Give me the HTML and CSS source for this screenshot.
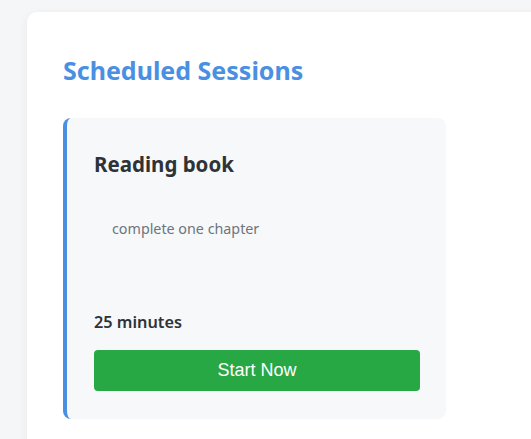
FILE: index.html
```html
<!DOCTYPE html>
<html lang="en">
<head>
<meta charset="utf-8">
<title>Scheduled Sessions</title>
<link rel="stylesheet" href="styles.css">
</head>
<body>
<main class="panel">
  <h2 class="panel-title">Scheduled Sessions</h2>
  <div class="session-list">
    <article class="session-card">
      <h3 class="session-title">Reading book</h3>
      <p class="session-desc">complete one chapter</p>
      <p class="session-duration">25 minutes</p>
      <button class="start-btn" type="button">Start Now</button>
    </article>
  </div>
</main>
</body>
</html>
```
FILE: styles.css
```css
* { box-sizing: border-box; }
html, body { margin: 0; padding: 0; }
body {
  background: #f5f6f8;
  font-family: "Noto Sans", "Open Sans", sans-serif;
  color: #333;
  padding: 12px 0 0 27px;
  overflow: hidden;
  height: 439px;
}
.panel {
  background: #fff;
  border-radius: 10px;
  box-shadow: 0 2px 10px rgba(0, 0, 0, 0.06);
  width: 560px;
  min-height: 500px;
  padding: 40px 36px;
}
.panel-title {
  margin: 0 0 30px;
  font-size: 25px;
  font-weight: 700;
  color: #4a90e2;
  line-height: 36px;
}
.session-list {
  display: grid;
  grid-template-columns: 383px;
}
.session-card {
  background: #f7f8fa;
  border-left: 4px solid #4a90e2;
  border-radius: 8px;
  padding: 29px 26px 28px 27px;
  display: flex;
  flex-direction: column;
}
.session-title {
  margin: 0;
  font-size: 20.5px;
  font-weight: 700;
  color: #2d3338;
  line-height: 34px;
}
.session-desc {
  margin: 38px 0 0 18px;
  font-size: 14.3px;
  color: #6c757d;
  line-height: 20px;
  min-height: 85px;
}
.session-duration {
  margin: 6px 0 16px;
  font-size: 16.3px;
  font-weight: 600;
  color: #2d3338;
  line-height: 24px;
}
.start-btn {
  height: 41px;
  border: none;
  border-radius: 4px;
  background: #28a745;
  color: #fff;
  font-family: "Liberation Sans", Arial, sans-serif;
  font-size: 18px;
  cursor: pointer;
}
```
